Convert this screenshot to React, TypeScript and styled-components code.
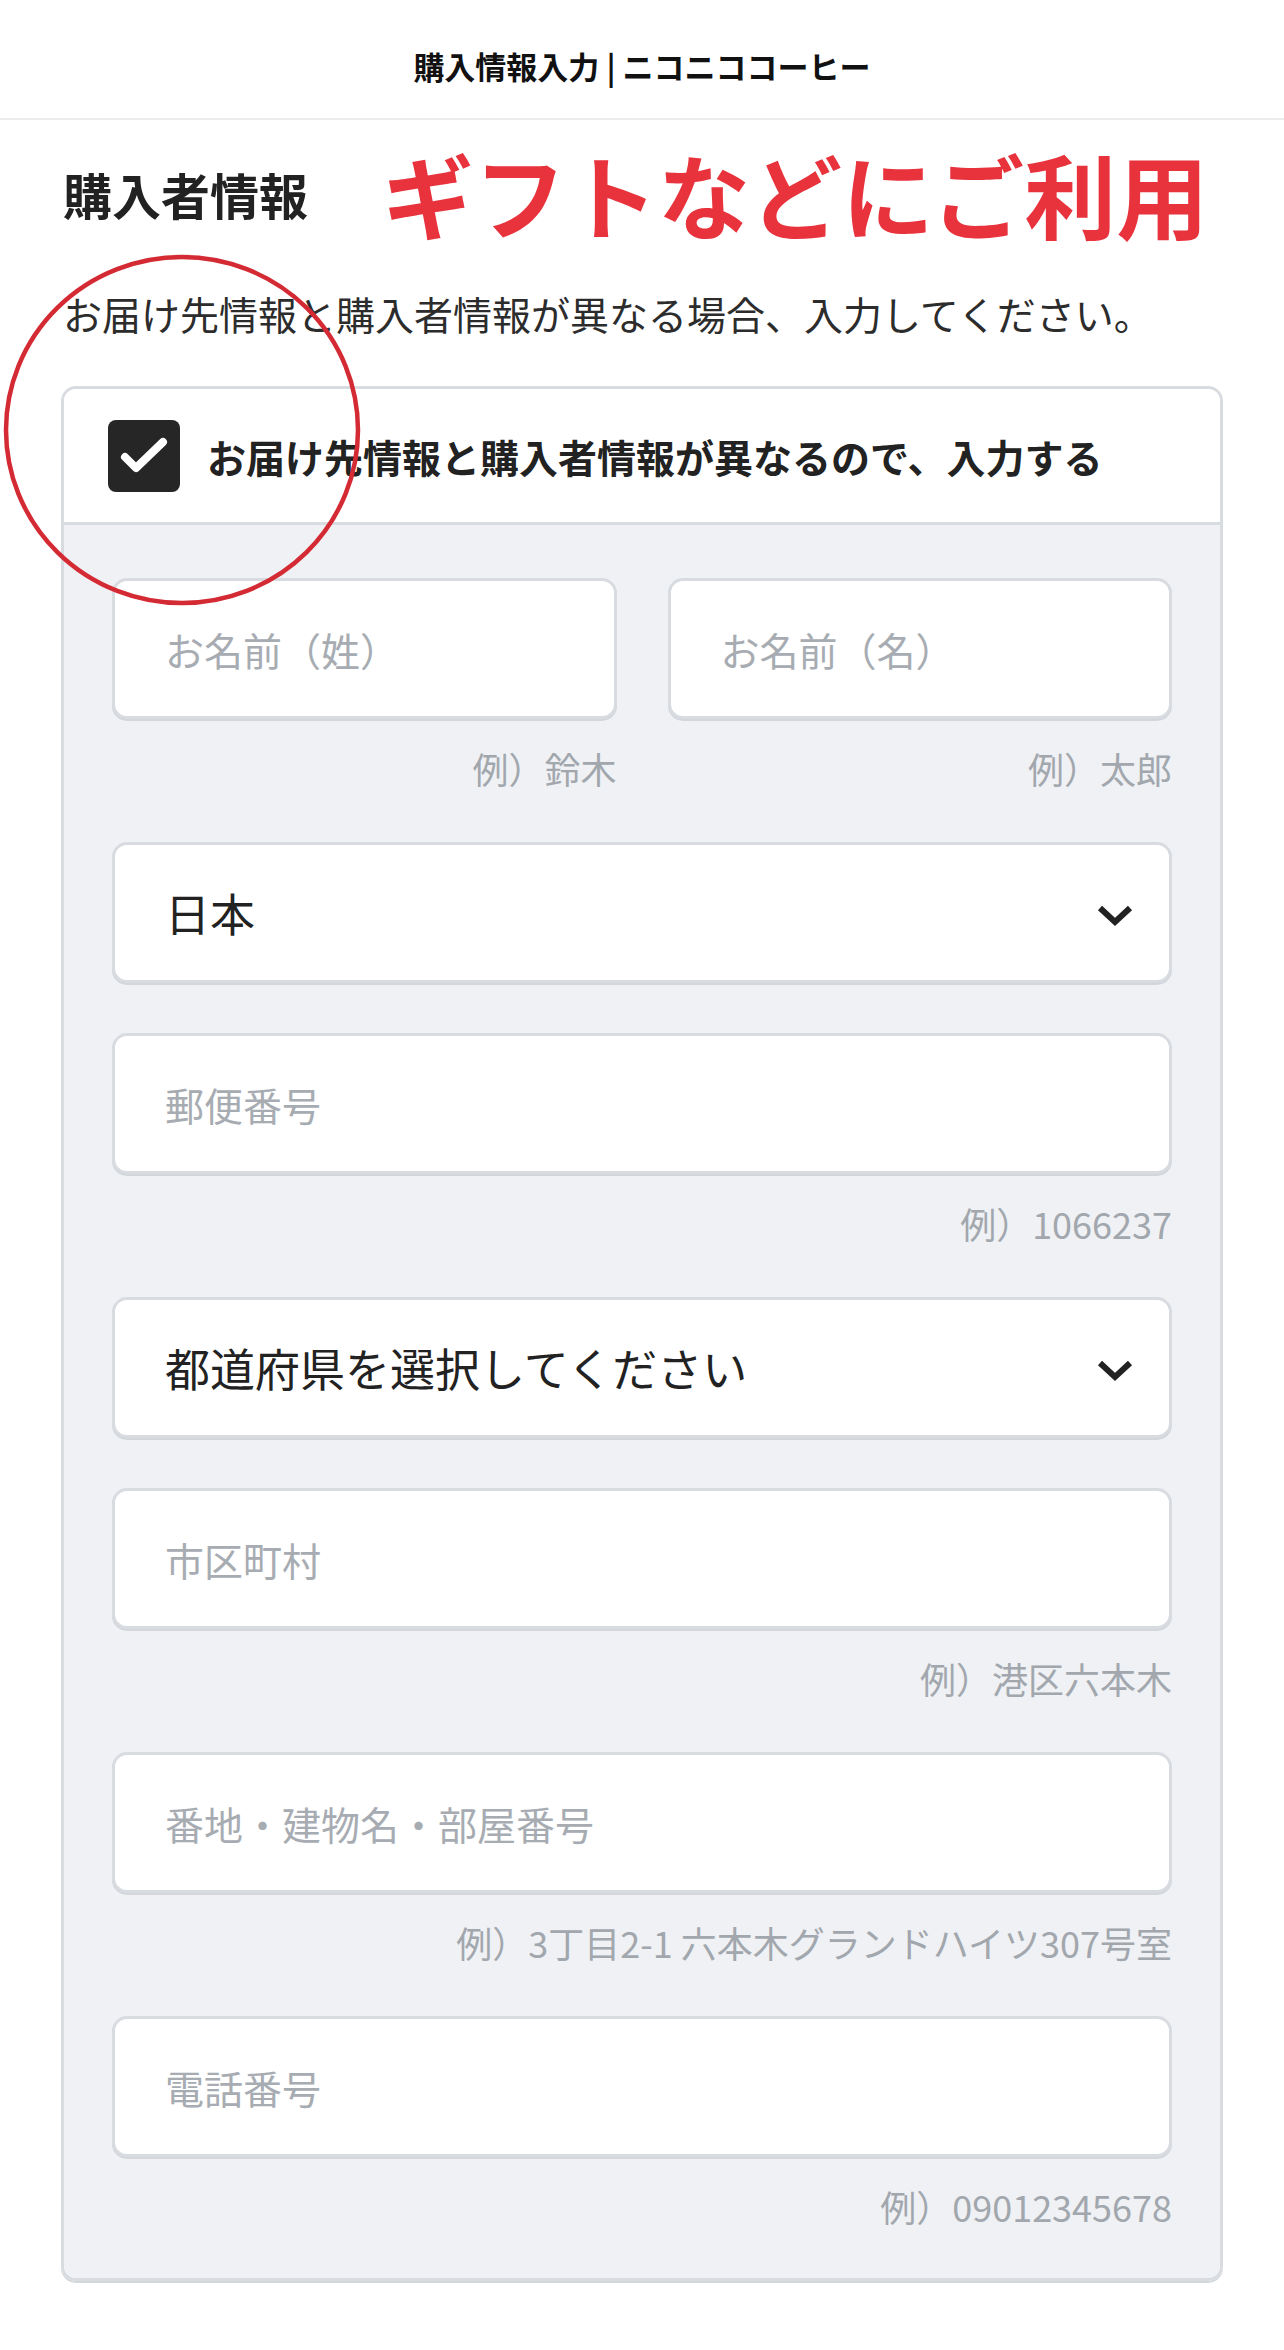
import React from 'react';
import styled, { createGlobalStyle } from 'styled-components';

const GlobalStyle = createGlobalStyle`
  body {
    margin: 0;
    background: #ffffff;
    font-family: "Noto Sans CJK JP", "Noto Sans", sans-serif;
    color: #222222;
  }
`;

const Page = styled.div`
  position: relative;
  width: 1284px;
  min-height: 2350px;
`;

const Header = styled.header`
  height: 120px;
  padding-top: 12px;
  box-sizing: border-box;
  border-bottom: 2px solid #ececec;
  display: flex;
  align-items: center;
  justify-content: center;
`;

const HeaderTitle = styled.h1`
  margin: 0;
  font-size: 31px;
  font-weight: 700;
  color: #111111;
`;

const Main = styled.main`
  padding: 0 61px;
`;

const HeadingRow = styled.div`
  margin-top: 23px;
  height: 100px;
  display: flex;
  align-items: center;
  gap: 74px;
`;

const Heading = styled.h2`
  margin: 0 0 0 2px;
  font-size: 49px;
  font-weight: 700;
  color: #222222;
`;

const GiftNote = styled.span`
  font-size: 92px;
  font-weight: 700;
  color: #e8333d;
  line-height: 1;
`;

const Description = styled.p`
  margin: 43px 0 0 2px;
  font-size: 39px;
  line-height: 54px;
  color: #2c2c2c;
`;

const Card = styled.section`
  margin-top: 46px;
  border: 3px solid #d8dce1;
  border-radius: 15px;
  overflow: hidden;
  box-shadow: 0 2px 0 #d3d7dc;
`;

const CheckRow = styled.label`
  height: 133px;
  display: flex;
  align-items: center;
  gap: 27px;
  padding-left: 44px;
  background: #ffffff;
  border-bottom: 3px solid #d8dce1;
`;

const CheckBox = styled.span`
  width: 72px;
  height: 72px;
  border-radius: 8px;
  background: #262626;
  display: flex;
  align-items: center;
  justify-content: center;
`;

const CheckLabel = styled.span`
  font-size: 39px;
  font-weight: 700;
  color: #222222;
`;

const FormBody = styled.div`
  background: #eff1f4;
  padding: 53px 48px 48px;
  display: flex;
  flex-direction: column;
  gap: 50px;
`;

const NameRow = styled.div`
  display: grid;
  grid-template-columns: 1fr 1fr;
  gap: 51px;
`;

const Group = styled.div`
  display: flex;
  flex-direction: column;
`;

const fieldBox = `
  width: 100%;
  height: 141px;
  box-sizing: border-box;
  border: 3px solid #d8dce1;
  border-radius: 15px;
  background: #ffffff;
  box-shadow: 0 2px 0 #d3d7dc;
`;

const TextField = styled.input`
  ${fieldBox}
  padding: 0 50px;
  font-family: inherit;
  font-size: 39px;
  color: #222222;
  outline: none;

  &::placeholder {
    color: #a7acb2;
  }
`;

const SelectField = styled.div`
  ${fieldBox}
  display: flex;
  align-items: center;
  justify-content: space-between;
  padding: 0 36px 0 50px;
  font-size: 45px;
  color: #222222;
`;

const Hint = styled.div`
  margin-top: 25px;
  line-height: 48px;
  font-size: 36px;
  color: #a2a7ae;
  text-align: right;
`;

const Circle = styled.svg`
  position: absolute;
  left: 2px;
  top: 253px;
  pointer-events: none;
`;

const Chevron = () => (
  <svg width="36" height="22" viewBox="0 0 36 22" style={{ marginTop: 6 }}>
    <path d="M3 3 L18 17 L33 3" fill="none" stroke="#222" strokeWidth="6" strokeLinejoin="miter" />
  </svg>
);

const CheckMark = () => (
  <svg width="72" height="72" viewBox="0 0 72 72">
    <path d="M17 37 L28 48 L55 22" fill="none" stroke="#fff" strokeWidth="8" strokeLinecap="round" strokeLinejoin="round" />
  </svg>
);

type FieldProps = {
  placeholder: string,
  hint?: string,
}

const Field = ({ placeholder, hint }: FieldProps) => (
  <Group>
    <TextField placeholder={placeholder} />
    {hint && <Hint>{hint}</Hint>}
  </Group>
);

const App = () => {
  return (
    <Page>
      <GlobalStyle />
      <Header>
        <HeaderTitle>購入情報入力 | ニコニココーヒー</HeaderTitle>
      </Header>
      <Main>
        <HeadingRow>
          <Heading>購入者情報</Heading>
          <GiftNote>ギフトなどにご利用</GiftNote>
        </HeadingRow>
        <Description>お届け先情報と購入者情報が異なる場合、入力してください。</Description>
        <Card>
          <CheckRow>
            <CheckBox><CheckMark /></CheckBox>
            <CheckLabel>お届け先情報と購入者情報が異なるので、入力する</CheckLabel>
          </CheckRow>
          <FormBody>
            <NameRow>
              <Field placeholder="お名前（姓）" hint="例）鈴木" />
              <Field placeholder="お名前（名）" hint="例）太郎" />
            </NameRow>
            <SelectField>
              <span>日本</span>
              <Chevron />
            </SelectField>
            <Field placeholder="郵便番号" hint="例）1066237" />
            <SelectField>
              <span>都道府県を選択してください</span>
              <Chevron />
            </SelectField>
            <Field placeholder="市区町村" hint="例）港区六本木" />
            <Field placeholder="番地・建物名・部屋番号" hint="例）3丁目2-1 六本木グランドハイツ307号室" />
            <Field placeholder="電話番号" hint="例）09012345678" />
          </FormBody>
        </Card>
      </Main>
      <Circle width="360" height="354" viewBox="0 0 360 354">
        <ellipse cx="180" cy="177" rx="176" ry="173" fill="none" stroke="#d42a33" strokeWidth="4.5" />
      </Circle>
    </Page>
  );
};

export default App;
